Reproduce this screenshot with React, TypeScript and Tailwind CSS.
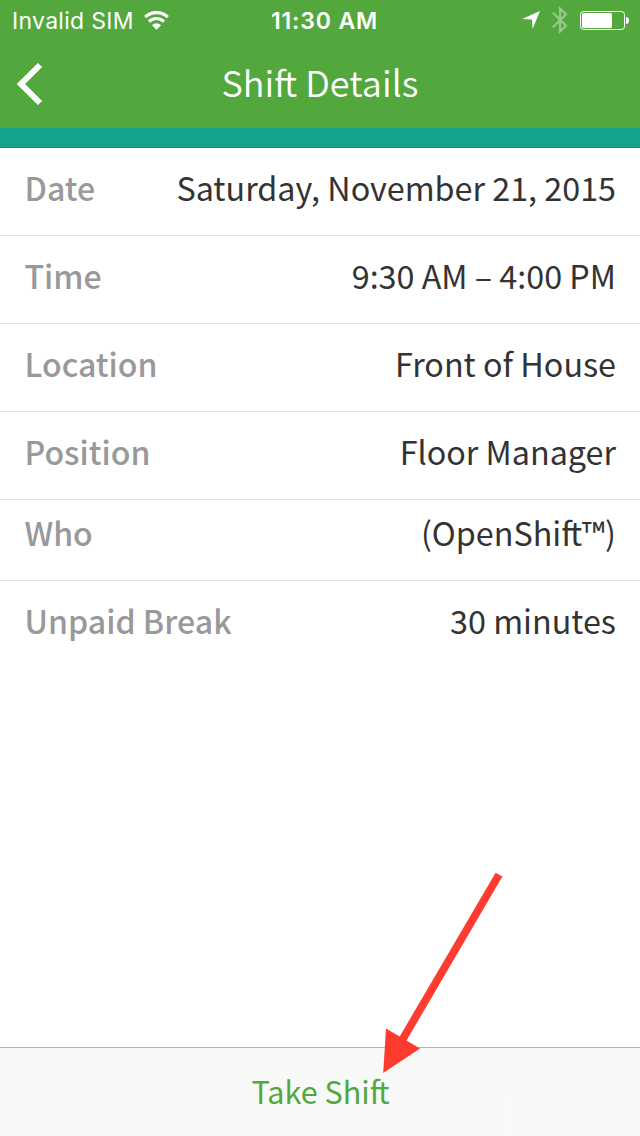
import React from "react";

type Row = { label: string; value: React.ReactNode; box: string };

/* "Shift" with the f and t joined along the crossbar */
function Shift() {
  return (
    <>
      Shi<span className="-tracking-[0.055em]">f</span>t
    </>
  );
}

const rows: Row[] = [
  { label: "Date", value: "Saturday, November 21, 2015", box: "h-[88px] pt-[15px] border-b" },
  { label: "Time", value: "9:30 AM – 4:00 PM", box: "h-[88px] pt-[15px] border-b" },
  { label: "Location", value: "Front of House", box: "h-[88px] pt-[15px] border-b" },
  { label: "Position", value: "Floor Manager", box: "h-[88px] pt-[15px] border-b" },
  { label: "Who", value: <>(Open<Shift />™)</>, box: "h-[81px] pt-[8px] border-b" },
  { label: "Unpaid Break", value: "30 minutes", box: "h-[88px] pt-[15px]" },
];

function StatusBar() {
  return (
    <div className="flex h-10 items-center justify-between font-['Inter','Liberation_Sans',sans-serif] text-[23px] leading-[40px] text-white">
      <div className="flex w-[220px] items-center gap-[10px] pl-3 pt-px">
        <span className="whitespace-nowrap tracking-[0.3px]">Invalid SIM</span>
        <svg className="-mt-px" width="25" height="19" viewBox="0 0 25 19" fill="none" stroke="white" strokeWidth="3.2">
          <path d="M1.200 6.200a16 16 0 0 1 22.600 0" />
          <path d="M5 10.600a10.600 10.600 0 0 1 15 0" />
          <path d="M12.500 18.700 8 14.200a6.400 6.400 0 0 1 9 0z" fill="white" stroke="none" />
        </svg>
      </div>
      <span className="whitespace-nowrap pl-[9px] pt-px font-semibold tracking-[0.85px]">11:30 AM</span>
      <div className="flex w-[220px] items-center justify-end pr-[11px]">
        <svg width="18" height="18" viewBox="0 0 18 18" fill="white">
          <path d="M18 0 10.600 18 10 8.600 0 8z" />
        </svg>
        <svg className="ml-3 opacity-40" width="16" height="28" viewBox="0 0 16 28" fill="none" stroke="white" strokeWidth="2.2">
          <path d="M.8 6.500 14 19.800 8 25.500V2.500l6 5.700L.8 21.200" />
        </svg>
        <svg className="ml-3" width="49" height="19" viewBox="0 0 49 19" fill="white">
          <rect x=".5" y=".5" width="44" height="18" rx="3" fill="none" stroke="white" />
          <rect x="2" y="2" width="30" height="15" rx="1.500" />
          <path d="M46 6c2 0 3 1.500 3 3.500S48 13 46 13z" />
        </svg>
      </div>
    </div>
  );
}

export default function App() {
  return (
    <div className="relative flex h-[1136px] w-[640px] flex-col overflow-hidden bg-white font-['Noto_Sans_CJK_SC',sans-serif]">
      <header className="h-32 shrink-0 bg-[#52a83c]">
        <StatusBar />
        <div className="grid h-[88px] grid-cols-[100px_1fr_100px] items-start">
          <svg className="ml-4 mt-[22px]" width="28" height="44" viewBox="0 0 28 44" fill="none" stroke="white" strokeWidth="6">
            <path d="M24 3 5 22 24 41" />
          </svg>
          <h1 className="pt-[11px] text-center text-[36px] font-[350] leading-[60px] tracking-[0.06px] text-white">
            <Shift /> Details
          </h1>
        </div>
      </header>
      <div className="h-5 shrink-0 border-b border-[#0f9079] bg-[#12a58c]" />
      <main className="flex-1">
        {rows.map((r) => (
          <div key={r.label} className={`flex justify-between border-[#e2e2e2] px-6 text-[32.4px] leading-[48px] ${r.box}`}>
            <span className="whitespace-nowrap pl-[0.5px] text-[32.1px] font-medium text-[#999999]">{r.label}</span>
            <span className="whitespace-nowrap text-[32.3px] text-[#333333]">{r.value}</span>
          </div>
        ))}
      </main>
      <footer className="h-[89px] shrink-0 border-t border-[#b2b2b2] bg-linear-to-b from-[#f7f9f7] to-[#f9f9f9] pt-[19px] pl-px text-center text-[30.6px] leading-[48px] text-[#52a83c]">
        Take <Shift />
      </footer>
      <svg className="absolute left-[380px] top-[870px]" width="125" height="205" viewBox="380 870 125 205" fill="#ff3b30">
        <path d="M495.600 872.700 502.400 876.500 406.500 1040.500 420 1048.500 383.200 1073 386 1028.600 399.700 1036.500z" />
      </svg>
    </div>
  );
}
